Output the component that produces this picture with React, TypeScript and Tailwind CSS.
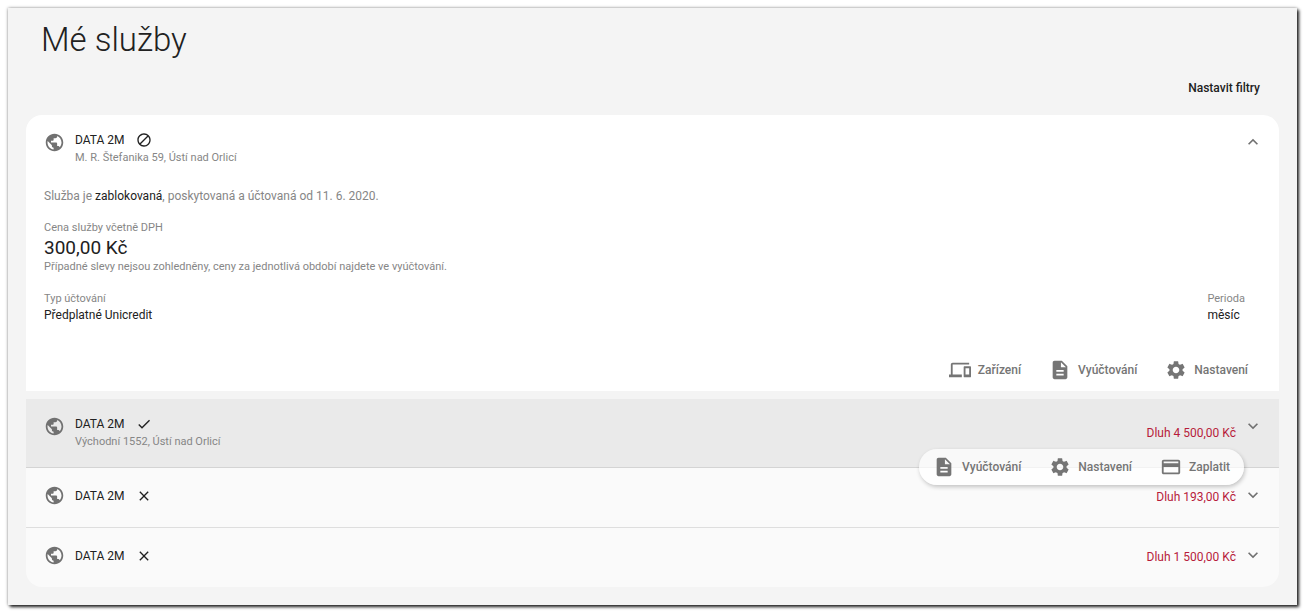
import type { IconType } from 'react-icons'
import {
  MdBlock,
  MdCheck,
  MdClose,
  MdCreditCard,
  MdDescription,
  MdDevices,
  MdExpandLess,
  MdExpandMore,
  MdPublic,
  MdSettings,
} from 'react-icons/md'

type Action = { label: string; icon: IconType }

type Service = {
  id: number
  name: string
  status: IconType
  statusLabel: string
  address?: string
  debt?: string
}

const cardActions: Action[] = [
  { label: 'Zařízení', icon: MdDevices },
  { label: 'Vyúčtování', icon: MdDescription },
  { label: 'Nastavení', icon: MdSettings },
]

const hoverActions: Action[] = [
  { label: 'Vyúčtování', icon: MdDescription },
  { label: 'Nastavení', icon: MdSettings },
  { label: 'Zaplatit', icon: MdCreditCard },
]

const openService: Service = {
  id: 1,
  name: 'DATA 2M',
  status: MdBlock,
  statusLabel: 'zablokovaná',
  address: 'M. R. Štefanika 59, Ústí nad Orlicí',
}

const hoveredService: Service = {
  id: 2,
  name: 'DATA 2M',
  status: MdCheck,
  statusLabel: 'aktivní',
  address: 'Východní 1552, Ústí nad Orlicí',
  debt: 'Dluh 4 500,00 Kč',
}

const endedServices: Service[] = [
  { id: 3, name: 'DATA 2M', status: MdClose, statusLabel: 'ukončená', debt: 'Dluh 193,00 Kč' },
  { id: 4, name: 'DATA 2M', status: MdClose, statusLabel: 'ukončená', debt: 'Dluh 1 500,00 Kč' },
]

function ServiceTitle({ service }: { service: Service }) {
  const Status = service.status
  return (
    <span className={service.address ? 'flex items-start gap-2.5' : 'flex items-center gap-2.5'}>
      <MdPublic className="h-[21px] w-[21px] text-[#717171]" aria-hidden />
      <span className="block">
        <span className="flex h-4 items-center gap-[11px] text-[12px] leading-4">
          {service.name}
          <Status className="h-4 w-4" aria-label={service.statusLabel} />
        </span>
        {service.address && (
          <span className="mt-0.5 block text-[11px] leading-4 text-[#868686]">{service.address}</span>
        )}
      </span>
    </span>
  )
}

function ActionButton({ action }: { action: Action }) {
  const Icon = action.icon
  return (
    <button type="button" className="flex items-center gap-[7px] text-[12px] font-medium leading-4 text-[#757575]">
      <Icon className="h-[22px] w-[22px]" aria-hidden />
      {action.label}
    </button>
  )
}

function Field({ label, value }: { label: string; value: string }) {
  return (
    <div>
      <dt className="text-[11px] leading-4 text-[#868686]">{label}</dt>
      <dd className="text-[12px] leading-4">{value}</dd>
    </div>
  )
}

export default function App() {
  return (
    <div className="bg-white p-2 pb-[9px] font-[Roboto,sans-serif] text-[#212121]">
      <main className="bg-[#f4f4f4] px-[18px] pb-[18px] pt-2 shadow-[0_0_3px_rgba(0,0,0,0.4),2px_2px_3px_rgba(0,0,0,0.85)]">
        <h1 className="px-[15px] text-[33px] font-light leading-[48px]">Mé služby</h1>

        <div className="mt-4 flex justify-end px-[19px]">
          <button type="button" className="text-[12px] font-medium leading-4">
            Nastavit filtry
          </button>
        </div>

        <section className="mt-[19px] rounded-t-2xl bg-white pb-2.5 pl-[18px] pr-4 pt-[17px]">
          <button type="button" aria-expanded="true" className="flex w-full items-start justify-between text-left">
            <ServiceTitle service={openService} />
            <MdExpandLess className="h-5 w-5 text-[#717171]" aria-hidden />
          </button>

          <p className="mt-5 text-[12px] leading-5 text-[#868686]">
            Služba je <span className="text-[#212121]">zablokovaná</span>, poskytovaná a účtovaná od 11. 6. 2020.
          </p>

          <div className="mt-3.5">
            <p className="text-[11px] leading-4 text-[#868686]">Cena služby včetně DPH</p>
            <p className="text-[19px] leading-[23px]">300,00 Kč</p>
            <p className="text-[11px] leading-4 text-[#868686]">
              Případné slevy nejsou zohledněny, ceny za jednotlivá období najdete ve vyúčtování.
            </p>
          </div>

          <dl className="mt-4 flex justify-between pr-[18px]">
            <Field label="Typ účtování" value="Předplatné Unicredit" />
            <Field label="Perioda" value="měsíc" />
          </dl>

          <div className="mt-9 flex justify-end gap-7 pr-[15px]">
            {cardActions.map((action) => (
              <ActionButton key={action.label} action={action} />
            ))}
          </div>
        </section>

        <section className="mt-2 rounded-b-2xl bg-[#fafafa]">
          <div className="relative border-b border-[#d4d4d4] bg-[#eaeaea]">
            <button
              type="button"
              aria-expanded="false"
              className="flex w-full items-start justify-between py-[17px] pl-[18px] pr-4 text-left"
            >
              <ServiceTitle service={hoveredService} />
              <span className="flex items-start gap-[7px]">
                <span className="mt-[7px] text-[12px] leading-5 text-[#b71c3a]">{hoveredService.debt}</span>
                <MdExpandMore className="h-5 w-5 text-[#717171]" aria-hidden />
              </span>
            </button>
            <div className="absolute right-[35px] top-[50px] flex gap-7 rounded-full bg-white/70 px-3.5 py-[7px] shadow-[1px_2px_4px_rgba(0,0,0,0.22)]">
              {hoverActions.map((action) => (
                <ActionButton key={action.label} action={action} />
              ))}
            </div>
          </div>

          {endedServices.map((service) => (
            <button
              key={service.id}
              type="button"
              aria-expanded="false"
              className="flex w-full items-start justify-between border-b border-[#dedede] pb-5 pl-[18px] pr-4 pt-[17px] text-left last:border-b-0"
            >
              <ServiceTitle service={service} />
              <span className="flex items-start gap-[7px]">
                <span className="mt-0.5 text-[12px] leading-5 text-[#b71c3a]">{service.debt}</span>
                <MdExpandMore className="h-5 w-5 text-[#717171]" aria-hidden />
              </span>
            </button>
          ))}
        </section>
      </main>
    </div>
  )
}
